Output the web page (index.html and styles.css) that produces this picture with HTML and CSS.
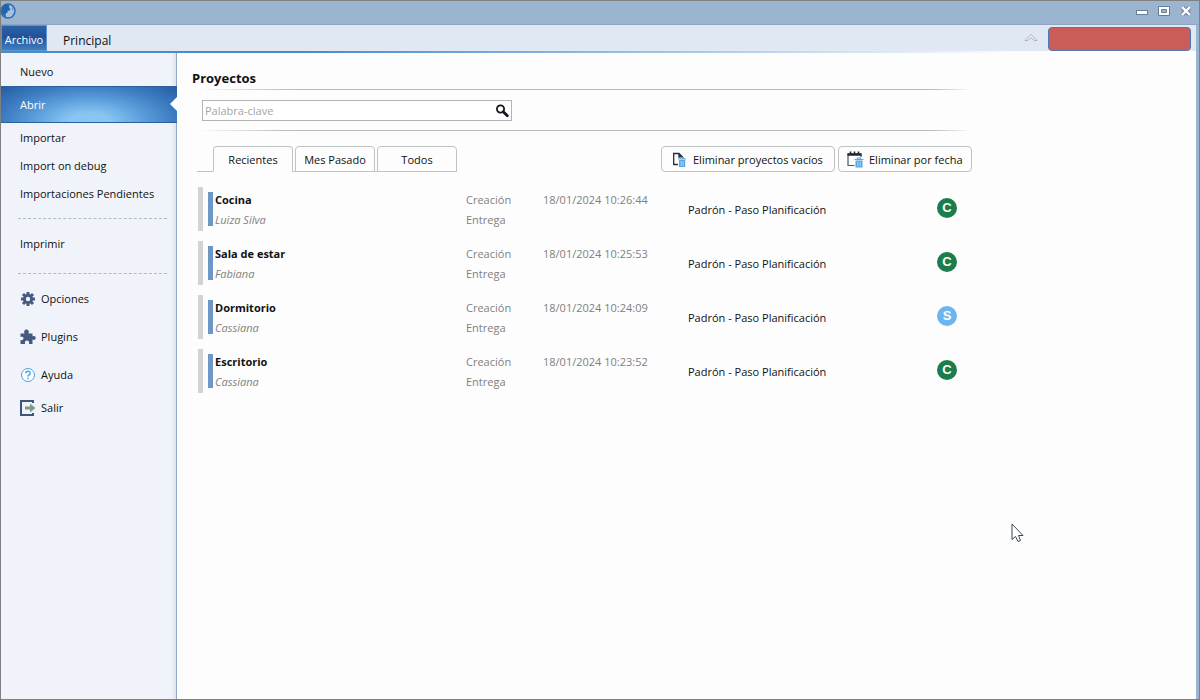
FILE: index.html
```html
<!DOCTYPE html>
<html lang="es">
<head>
<meta charset="utf-8">
<title>Proyectos</title>
<link rel="stylesheet" href="styles.css">
</head>
<body>
<div class="window">
  <header class="titlebar">
    <svg class="logo" width="16" height="16" viewBox="0 0 16 16" aria-hidden="true">
      <circle cx="8" cy="8" r="7" fill="#a3c3e6" stroke="#2b69ac" stroke-width="1.4"/>
      <path d="M2 4L5 1.500L8 1.500L9.500 3L9 5L10.500 6L9.500 7.500L7.500 8L7.500 10L6 10L5.500 12L6.500 14.500L4 13L1.500 9.500Z" fill="#2463a8"/>
      <path d="M12 4L13.500 6L13 7.500Z" fill="#2463a8"/>
    </svg>
    <div class="window-buttons">
      <button class="win-btn" aria-label="Minimizar">
        <svg width="14" height="12" viewBox="0 0 14 12"><rect x="1.500" y="5.500" width="11" height="4" fill="#fff" stroke="#667c98"/></svg>
      </button>
      <button class="win-btn" aria-label="Maximizar">
        <svg width="14" height="12" viewBox="0 0 14 12"><path d="M1.500 1.500H12.500V10.500H1.500ZM4.500 4.500V7.500H9.500V4.500Z" fill="#fff" fill-rule="evenodd" stroke="#667c98"/></svg>
      </button>
      <button class="win-btn" aria-label="Cerrar">
        <svg width="14" height="12" viewBox="0 0 14 12"><path d="M3.500 2.500L10.500 9.500M10.500 2.500L3.500 9.500" stroke="#667c98" stroke-width="4.400"/><path d="M3.200 2.200L10.800 9.800M10.800 2.200L3.200 9.800" stroke="#fff" stroke-width="2.400"/></svg>
      </button>
    </div>
  </header>

  <nav class="ribbon" aria-label="Cinta">
    <button class="ribbon-tab ribbon-tab-active">Archivo</button>
    <button class="ribbon-tab">Principal</button>
    <button class="collapse" aria-label="Contraer la cinta">
      <svg width="14" height="9" viewBox="0 0 14 9"><path d="M1 7.500L7 1.500L13 7.500H10.500L7 4.500L3.500 7.500Z" fill="#f7f7f7" stroke="#a9adb3"/></svg>
    </button>
    <div class="account"></div>
  </nav>

  <div class="body">
    <aside class="sidebar">
      <button class="item">Nuevo</button>
      <button class="item item-active">Abrir</button>
      <button class="item">Importar</button>
      <button class="item">Import on debug</button>
      <button class="item">Importaciones Pendientes</button>
      <hr class="separator">
      <button class="item">Imprimir</button>
      <hr class="separator separator-last">
      <button class="item item-tall">
        <svg width="16" height="16" viewBox="0 0 16 16"><g stroke="#455a80" stroke-width="3"><path d="M8 1V15M1 8H15M3 3L13 13M13 3L3 13"/></g><circle cx="8" cy="8" r="5" fill="#455a80"/><circle cx="8" cy="8" r="2.200" fill="#f0f4fa"/></svg>
        Opciones
      </button>
      <button class="item item-tall">
        <svg width="16" height="16" viewBox="0 0 16 16"><path d="M.5 4.500H4.500C3.500 2 5 .5 6.500 .5S9.500 2 8.500 4.500H12.500V7.500C14.500 6.500 15.700 7.500 15.700 9S14.500 11.500 12.500 10.500V15H9C9.500 12.500 8.500 11.500 7 11.500S4.500 12.500 5 15H.5V11C2.500 11.500 3.500 10.500 3.500 9.300S2.500 7.300 .5 8Z" fill="#455a80"/></svg>
        Plugins
      </button>
      <button class="item item-tall">
        <svg width="16" height="16" viewBox="0 0 16 16" fill="none"><circle cx="8" cy="8" r="6.500" fill="#fff" stroke="#4ba0df"/><path d="M5.800 6.300C5.800 3.600 10.200 3.600 10.200 6.200C10.200 8 8 7.800 8 9.600M8 10.800V12.200" stroke="#4ba0df" stroke-width="1.500"/></svg>
        Ayuda
      </button>
      <button class="item">
        <svg width="16" height="16" viewBox="0 0 16 16"><path d="M13 3V1H1V15H13V13" fill="none" stroke="#3f5579" stroke-width="2"/><path d="M5 6.500H10V3.500L15.500 8L10 12.500V9.500H5Z" fill="#7c9c89"/></svg>
        Salir
      </button>
    </aside>

    <main class="main">
      <h1 class="title">Proyectos</h1>
      <div class="content">
        <form class="search">
          <div class="search-box">
            <input class="search-input" type="text" placeholder="Palabra-clave" aria-label="Palabra-clave">
            <button class="search-btn" type="button" aria-label="Buscar">
              <svg width="14" height="14" viewBox="0 0 14 14" fill="none"><circle cx="5.500" cy="5" r="3.600" stroke="#151522" stroke-width="1.800"/><path d="M8.300 7.800L12.300 11.800" stroke="#151522" stroke-width="2.800" stroke-linecap="round"/></svg>
            </button>
          </div>
        </form>
        <div class="toolbar">
          <div class="tabs" role="tablist">
            <button class="tab tab-active" role="tab" aria-selected="true">Recientes</button>
            <button class="tab" role="tab" aria-selected="false">Mes Pasado</button>
            <button class="tab" role="tab" aria-selected="false">Todos</button>
          </div>
          <div class="actions">
            <button class="action action-wide">
              <svg width="16" height="16" viewBox="0 0 16 16" fill="none"><path d="M6 12.500H1.700V1.500H7L10.500 5V6.500M7 1.500V5H10.500" stroke="#252c38" stroke-width="1.300"/><path d="M6 7H14M8.500 6.500V5.500H11.500V6.500" stroke="#55a7e3" stroke-width="1.200"/><path d="M7 8H13.200V15H7Z" fill="#55a7e3"/><path d="M9.100 9V14M11.100 9V14" stroke="#d5eafa" stroke-width=".7"/></svg>
              Eliminar proyectos vacíos
            </button>
            <button class="action">
              <svg width="17" height="17" viewBox="0 0 17 17" fill="none"><path d="M7.500 14.500H1V3H14V6" stroke="#3d6270" stroke-width="1.200"/><path d="M.5 3.500H14.500" stroke="#252630" stroke-width="2.500"/><path d="M3.500 .5V4M7.500 .5V4M11.500 .5V4" stroke="#252630" stroke-width="1.600"/><path d="M7.500 8.500H16.500M10.500 8V7H13.500V8" stroke="#55a7e3" stroke-width="1.200"/><path d="M8.500 9.500H15.500V16.500H8.500Z" fill="#55a7e3"/><path d="M10.800 10.500V15.500M13.200 10.500V15.500" stroke="#d5eafa" stroke-width=".7"/></svg>
              Eliminar por fecha
            </button>
          </div>
        </div>

        <ul class="projects">
          <li class="project">
            <div class="heading"><strong class="name">Cocina</strong><em class="client">Luiza Silva</em></div>
            <dl class="dates"><dt>Creación</dt><dd>18/01/2024 10:26:44</dd><dt>Entrega</dt><dd></dd></dl>
            <span class="stage">Padrón - Paso Planificación</span>
            <span class="badge">C</span>
          </li>
          <li class="project">
            <div class="heading"><strong class="name">Sala de estar</strong><em class="client">Fabiana</em></div>
            <dl class="dates"><dt>Creación</dt><dd>18/01/2024 10:25:53</dd><dt>Entrega</dt><dd></dd></dl>
            <span class="stage">Padrón - Paso Planificación</span>
            <span class="badge">C</span>
          </li>
          <li class="project">
            <div class="heading"><strong class="name">Dormitorio</strong><em class="client">Cassiana</em></div>
            <dl class="dates"><dt>Creación</dt><dd>18/01/2024 10:24:09</dd><dt>Entrega</dt><dd></dd></dl>
            <span class="stage">Padrón - Paso Planificación</span>
            <span class="badge badge-blue">S</span>
          </li>
          <li class="project">
            <div class="heading"><strong class="name">Escritorio</strong><em class="client">Cassiana</em></div>
            <dl class="dates"><dt>Creación</dt><dd>18/01/2024 10:23:52</dd><dt>Entrega</dt><dd></dd></dl>
            <span class="stage">Padrón - Paso Planificación</span>
            <span class="badge">C</span>
          </li>
        </ul>
      </div>
    </main>
  </div>
</div>
<svg class="pointer" width="14" height="20" viewBox="0 0 14 20" aria-hidden="true"><path d="M1 1V16.500L4.500 13.500L7 18.500L9.500 17.500L7.500 12.500H12Z" fill="#fff" stroke="#3b4658"/></svg>
</body>
</html>
```
FILE: styles.css
```css
* {
  box-sizing: border-box;
}

body {
  margin: 0;
  font-family: "Open Sans", "Noto Sans", sans-serif;
  font-size: 11px;
  line-height: 20px;
  color: #111;
}

button {
  margin: 0;
  padding: 0;
  border: 0;
  background: none;
  font: inherit;
  color: inherit;
  white-space: nowrap;
}

svg {
  display: block;
  flex: none;
}

.window {
  display: flex;
  flex-direction: column;
  min-height: 100vh;
  border: 1px solid #808080;
  background: #9bb5d1;
}

.titlebar {
  display: flex;
  align-items: center;
  justify-content: space-between;
  height: 24px;
  padding: 0 6px 3px 0;
  border-bottom: 1px solid #8fa4c3;
}

.logo {
  margin-left: -1px;
}

.window-buttons {
  display: flex;
  gap: 8px;
}

.ribbon {
  display: flex;
  height: 28px;
  margin-right: 3px;
  padding-right: 5px;
  background: linear-gradient(90deg, #4a8ac8 25%, #8fb9e0 50%, #fdfdfd 85%) bottom / 100% 2px no-repeat #dfe8f3;
}

.ribbon-tab {
  height: 26px;
  padding: 5px 16px 0;
  font-size: 12px;
}

.ribbon-tab-active {
  width: 46px;
  padding: 4px 0 0;
  border: 1px solid #5b93cf;
  background: linear-gradient(#2c62a8, #21529a 45%, #3f7fc0);
  color: #fff;
  font-size: 11px;
}

.collapse {
  margin-left: auto;
  padding: 0 10px 4px;
}

.account {
  width: 143px;
  height: 24px;
  margin-top: 2px;
  border: 1px solid #5577ad;
  border-radius: 4px;
  background: #ca5c5a;
}

.body {
  display: flex;
  flex: 1;
  margin-right: 3px;
  background: #fdfdfd;
}

.sidebar {
  display: flex;
  flex-direction: column;
  flex: none;
  width: 176px;
  padding-top: 5px;
  border-right: 1px solid #8fa9c9;
  background: linear-gradient(90deg, #f0f4fa 97%, #dde3ec);
}

.item {
  display: flex;
  align-items: center;
  gap: 5px;
  height: 28px;
  padding-left: 19px;
}

.item-active {
  position: relative;
  width: 176px;
  height: 37px;
  margin-bottom: 1px;
  border: solid #2a609f;
  border-width: 1px 0;
  background: radial-gradient(ellipse 100px 42px at 50% 100%, #88c6f2 20%, #5b9edb 55%, #3d7dc1 85%, #21549c 130%);
  color: #fff;
}

.item-active::after {
  content: "";
  position: absolute;
  top: 10px;
  right: 0;
  border: solid transparent;
  border-width: 7px 7px 7px 0;
  border-right-color: #fdfdfd;
}

.item-tall {
  height: 38px;
}

.separator {
  width: 149px;
  margin: 10px 0 11px 17px;
  border: 0;
  border-top: 1px dashed #b3bac5;
}

.separator-last {
  margin-top: 15px;
  margin-bottom: 6px;
}

.main {
  flex: 1;
  padding: 15px;
}

.title {
  margin: 0;
  font-size: 13px;
  line-height: 20px;
}

.content {
  max-width: 780px;
  padding-left: 5px;
}

.search {
  margin-top: 1px;
  padding: 11px 5px 10px;
  background:
    linear-gradient(90deg, #fdfdfd, #bbb 12%, #bbb 95%, #fdfdfd) top / 100% 1px no-repeat,
    linear-gradient(90deg, #fdfdfd, #bbb 12%, #bbb 95%, #fdfdfd) bottom / 100% 1px no-repeat;
}

.search-box {
  display: flex;
  align-items: center;
  width: 310px;
  height: 21px;
  padding-right: 2px;
  border: 1px solid #b4b4b4;
  background: #fff;
}

.search-input {
  flex: 1;
  min-width: 0;
  height: 19px;
  padding: 0 2px;
  border: 0;
  outline: 0;
  background: none;
  font: inherit;
}

.search-input::placeholder {
  color: #a5a5a5;
  opacity: 1;
}

.toolbar {
  display: flex;
  justify-content: space-between;
  margin: 15px 0;
}

.tabs {
  display: flex;
  gap: 2px;
  padding-left: 16px;
  background: linear-gradient(#bfc3c4, #bfc3c4) bottom / 100% 1px no-repeat;
}

.tab {
  width: 80px;
  height: 26px;
  padding-top: 2px;
  border: 1px solid #bfc3c4;
  border-radius: 4px 4px 0 0;
  background: #fdfdfd;
}

.tab-active {
  border-bottom-color: #fdfdfd;
}

.actions {
  display: flex;
  gap: 3px;
}

.action {
  display: flex;
  align-items: center;
  gap: 5px;
  height: 26px;
  min-width: 134px;
  padding: 1px 8px 0;
  border: 1px solid #bfc3c4;
  border-radius: 4px;
}

.action-wide {
  min-width: 174px;
  padding-left: 10px;
}

.projects {
  display: grid;
  gap: 10px;
  margin: 0;
  padding: 0 0 0 1px;
  list-style: none;
}

.project {
  display: grid;
  grid-template-columns: 258px 222px 1fr 20px;
  align-items: center;
  height: 44px;
  padding: 0 15px 0 5px;
  border-left: 5px solid #d3d3d3;
}

.heading {
  display: flex;
  flex-direction: column;
  justify-content: center;
  height: 34px;
  padding: 2px 0 0 2px;
  border-left: 5px solid #6d97c6;
}

.client {
  color: #808080;
}

.dates {
  display: grid;
  grid-template-columns: 77px 1fr;
  grid-auto-rows: 20px;
  margin: 0;
  padding-top: 2px;
  color: #808080;
}

.dates dd {
  margin: 0;
}

.stage {
  padding-top: 2px;
}

.badge {
  align-self: start;
  width: 20px;
  height: 20px;
  margin-top: 11px;
  border-radius: 50%;
  background: #1a7d4b;
  color: #fff;
  font: bold 13px/20px "Liberation Sans", sans-serif;
  text-align: center;
}

.badge-blue {
  background: #6bb6f0;
}

.pointer {
  position: absolute;
  left: 1011px;
  top: 523px;
}
```
